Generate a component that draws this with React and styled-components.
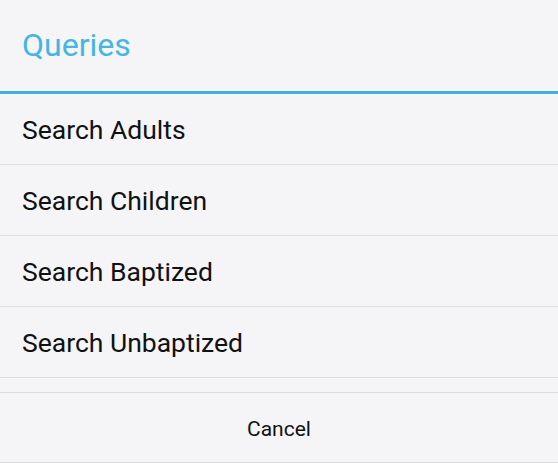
import React from 'react';
import styled, { createGlobalStyle } from 'styled-components';

const GlobalStyle = createGlobalStyle`
  html, body {
    margin: 0;
    padding: 0;
    background: #f5f5f7;
  }
  body {
    font-family: Roboto, "Liberation Sans", sans-serif;
  }
`;

const Dialog = styled.div`
  width: 558px;
  height: 463px;
  display: flex;
  flex-direction: column;
  background: #f5f5f7;
  overflow: hidden;
`;

const Header = styled.div`
  height: 94px;
  display: flex;
  align-items: center;
  padding: 0 0 2px 22px;
  border-bottom: 3px solid #3fb3df;
  box-sizing: border-box;
`;

const Title = styled.h1`
  margin: 0;
  font-size: 32px;
  font-weight: 400;
  color: #45b6e1;
`;

const List = styled.div`
  flex: 1;
  display: flex;
  flex-direction: column;
`;

const Row = styled.div`
  height: 71px;
  box-sizing: border-box;
  display: flex;
  align-items: center;
  padding: 1px 22px 0;
  font-size: 26.5px;
  color: #111;
  border-bottom: 1px solid #dedee0;
`;

const ButtonBar = styled.div`
  height: 71px;
  display: flex;
  border-top: 1px solid #dcdcde;
  border-bottom: 1px solid #dcdcde;
  box-sizing: border-box;
`;

const Button = styled.button`
  flex: 1;
  border: none;
  background: transparent;
  font-family: inherit;
  font-size: 21px;
  color: #111;
  padding: 2px 0 0;
`;

const items = ['Search Adults', 'Search Children', 'Search Baptized', 'Search Unbaptized'];

const App = () => {
  return (
    <Dialog>
      <GlobalStyle />
      <Header>
        <Title>Queries</Title>
      </Header>
      <List>
        {items.map((item) => (
          <Row key={item}>{item}</Row>
        ))}
      </List>
      <ButtonBar>
        <Button>Cancel</Button>
      </ButtonBar>
    </Dialog>
  );
};

export default App;
